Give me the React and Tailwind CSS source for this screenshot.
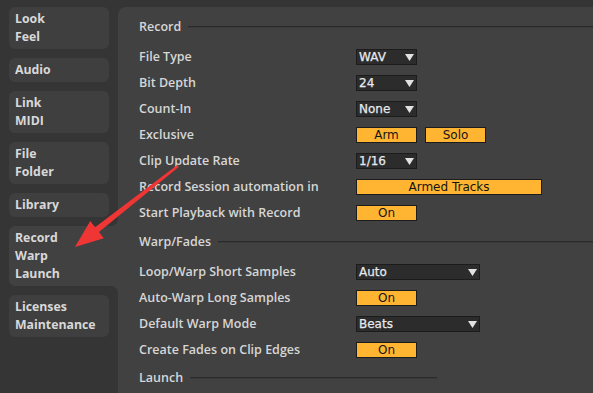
import React from "react";

const items = [
  ["Look", "Feel"],
  ["Audio"],
  ["Link", "MIDI"],
  ["File", "Folder"],
  ["Library"],
  ["Record", "Warp", "Launch"],
  ["Licenses", "Maintenance"],
];

function Dropdown({ value, w = "w-[61px]" }) {
  return (
    <div
      className={`${w} h-[16px] bg-[#2c2c2c] border border-[#1c1c1c] flex items-center justify-between pl-[2px] pr-[2px] text-[#e6e9ee] text-[12px] leading-none`}
      style={{ fontFamily: '"DejaVu Sans", sans-serif', WebkitTextStroke: "0.25px #e6e9ee" }}
    >
      <span>{value}</span>
      <svg width="9" height="7" viewBox="0 0 9 7">
        <polygon points="0,0 9,0 4.5,7" fill="#e2e2e2" />
      </svg>
    </div>
  );
}

function Btn({ label, w = "w-[61px]" }) {
  return (
    <div
      className={`${w} h-[16px] bg-[#ffb532] border border-[#1c1c1c] flex items-center justify-center text-[#141414] text-[12px] leading-none`}
      style={{ fontFamily: '"DejaVu Sans", sans-serif' }}
    >
      {label}
    </div>
  );
}

function Header({ title, lineW, className = "" }) {
  return (
    <div className={`h-[20px] flex items-center ${className}`}>
      <span className="font-semibold text-[#d6d6d6] text-[12.5px]">{title}</span>
      <div className={`ml-[7px] h-[2px] border-t border-[#2a2a2a] border-b-[1px] border-b-[#3a3a3a] ${lineW}`} />
    </div>
  );
}

function Row({ label, children }) {
  return (
    <div className="h-[26px] flex items-center">
      <div className="w-[217px] font-semibold text-[#d6d6d6] text-[12.5px]">{label}</div>
      <div className="flex items-center gap-[8px]">{children}</div>
    </div>
  );
}

export default function App() {
  return (
    <div
      className="relative w-[593px] h-[393px] bg-[#353535] flex overflow-hidden"
      style={{ fontFamily: '"Open Sans", sans-serif' }}
    >
      <div className="w-[118px] pt-[7px] pl-[9px] flex flex-col gap-[9px]">
        {items.map((lines, i) => {
          const sel = i === 5;
          return (
            <div
              key={i}
              className={
                sel
                  ? "relative w-[109px] bg-[#414141] rounded-l-[6px] pl-[6px] py-[3px]"
                  : "w-[100px] bg-[#3f3f3f] rounded-[6px] pl-[6px] py-[3px]"
              }
            >
              {lines.map((l) => (
                <div key={l} className="h-[18px] leading-[18px] text-[12.3px] font-bold text-[#d8d8d8]">
                  {l}
                </div>
              ))}
              {sel && (
                <>
                  <div className="absolute right-0 top-[-7px] w-[7px] h-[7px] bg-[#414141]">
                    <div className="w-full h-full bg-[#353535] rounded-br-[7px]" />
                  </div>
                  <div className="absolute right-0 bottom-[-7px] w-[7px] h-[7px] bg-[#414141]">
                    <div className="w-full h-full bg-[#353535] rounded-tr-[7px]" />
                  </div>
                </>
              )}
            </div>
          );
        })}
      </div>
      <div className="flex-1 mt-[7px] bg-[#414141] rounded-tl-[8px] pl-[21px] pt-[10px] flex flex-col">
        <Header title="Record" lineW="flex-1" />
        <div className="mt-[7px]">
          <Row label="File Type"><Dropdown value="WAV" /></Row>
          <Row label="Bit Depth"><Dropdown value="24" /></Row>
          <Row label="Count-In"><Dropdown value="None" /></Row>
          <Row label="Exclusive"><Btn label="Arm" /><Btn label="Solo" /></Row>
          <Row label="Clip Update Rate"><Dropdown value="1/16" /></Row>
          <Row label="Record Session automation in"><Btn label="Armed Tracks" w="w-[186px]" /></Row>
          <Row label="Start Playback with Record"><Btn label="On" /></Row>
        </div>
        <Header title="Warp/Fades" lineW="flex-1" className="mt-[6px]" />
        <div className="mt-[7px]">
          <Row label="Loop/Warp Short Samples"><Dropdown value="Auto" w="w-[124px]" /></Row>
          <Row label="Auto-Warp Long Samples"><Btn label="On" /></Row>
          <Row label="Default Warp Mode"><Dropdown value="Beats" w="w-[124px]" /></Row>
          <Row label="Create Fades on Clip Edges"><Btn label="On" /></Row>
        </div>
        <Header title="Launch" lineW="w-[247px]" className="mt-[5px]" />
      </div>
      <svg className="absolute left-0 top-0 pointer-events-none" width="593" height="393" viewBox="0 0 593 393">
        <polygon
          points="75,247 103.8,238.3 98.9,232.1 178.7,166.9 177.3,165.1 95.1,227.3 90.2,221.1"
          fill="#f03535"
        />
      </svg>
    </div>
  );
}
